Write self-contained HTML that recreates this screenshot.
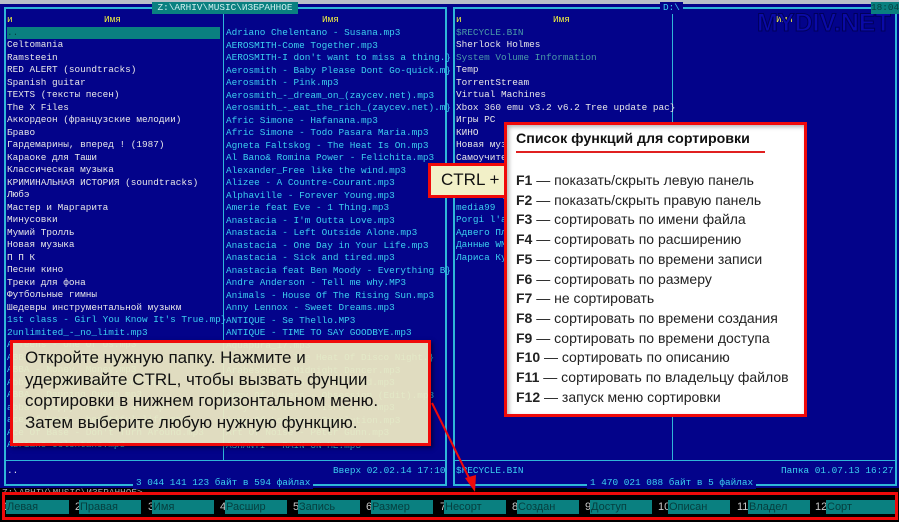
<!DOCTYPE html>
<html><head><meta charset="utf-8"><style>
*{margin:0;padding:0;box-sizing:border-box}
body{width:899px;height:522px;background:#000;position:relative;overflow:hidden;font-family:"Liberation Mono","DejaVu Sans Mono",monospace;font-size:9.4px}
.a{position:absolute;white-space:pre;line-height:12px}
.pan{position:absolute;background:#03038a}
.bd{position:absolute;border:1px solid #2fb6d8}
.vl{position:absolute;width:1px;background:#2fb6d8}
.hl{position:absolute;height:1px;background:#2fb6d8}
.w{color:#e8e8e8}.c{color:#3cd0f0}.y{color:#f0f040}.g{color:#4a9aa8}
.k{position:absolute;top:500px;height:14px;background:#0a8080;color:#063e3e;font-family:"Liberation Sans",sans-serif;font-size:11px;line-height:14px;padding-left:1px}
.kn{position:absolute;top:500px;color:#c8c8c8;font-size:11px;line-height:14px;font-family:"Liberation Sans",sans-serif}
.s{font-family:"Liberation Sans","DejaVu Sans",sans-serif}
</style></head><body>
<div style="position:absolute;left:0;top:0;width:899px;height:4px;background:#b8c0c8"></div>
<div class="pan" style="left:0;top:4px;width:450px;height:484px"></div>
<div class="pan" style="left:450px;top:4px;width:449px;height:484px"></div>
<div class="bd" style="left:4px;top:7px;width:443px;height:479px;border-width:2px"></div>
<div class="bd" style="left:453px;top:7px;width:444px;height:479px;border-width:2px"></div>
<div class="vl" style="left:223px;top:9px;height:451px"></div>
<div class="vl" style="left:672px;top:9px;height:451px"></div>
<div class="hl" style="left:6px;top:460px;width:439px"></div>
<div class="hl" style="left:455px;top:460px;width:440px"></div>
<div class="a" style="left:152px;top:2px;width:146px;height:12px;background:#0a8080;color:#d0f0f0;text-align:center">Z:\ARHIV\MUSIC\ИЗБРАННОЕ</div>
<div class="a c" style="left:660px;top:2px;background:#03038a;padding:0 3px">D:\</div>
<div class="a y" style="left:776px;top:14px">Имя</div>
<div class="a s" style="left:757px;top:9px;font-size:25px;line-height:28px;font-weight:bold;color:#0a0aa8;-webkit-text-stroke:1px #00005a">MYDIV.NET</div>
<div class="a" style="left:871px;top:2px;width:28px;background:#0a8080;color:#063e3e">18:04</div>
<div class="a y" style="left:7px;top:14px">и</div>
<div class="a y" style="left:104px;top:14px">Имя</div>
<div class="a y" style="left:322px;top:14px">Имя</div>
<div class="a y" style="left:456px;top:14px">и</div>
<div class="a y" style="left:553px;top:14px">Имя</div>
<div class="a" style="left:7px;top:27px;width:213px;height:12px;background:#0a8080;color:#063e3e">..</div>
<div class="a w" style="left:7px;top:39px;line-height:12.5px">Celtomania
Ramsteein
RED ALERT (soundtracks)
Spanish guitar
TEXTS (тексты песен)
The X Files
Аккордеон (французские мелодии)
Браво
Гардемарины, вперед ! (1987)
Караоке для Таши
Классическая музыка
КРИМИНАЛЬНАЯ ИСТОРИЯ (soundtracks)
Любэ
Мастер и Маргарита
Минусовки
Мумий Тролль
Новая музыка
П П К
Песни кино
Треки для фона
Футбольные гимны
Шедевры инструментальной музыкм</div>
<div class="a c" style="left:7px;top:314px;line-height:12.5px">1st class - Girl You Know It's True.mp}
2unlimited_-_no_limit.mp3
A-Teens - One Of Us.mp3
ABBA - Happy New Year.mp3
ABBA - Money, Money.mp3
Abba - Gimme Gimme Gimme.mp3
ABBA - Dancing Queen.mp3
abba - happy new year 424.mp3
ace_of_base_-_beautiful_life.mp3
Ace Of Base - Don't Turn Around.mp3
Adriano Celentano.mp3</div>
<div class="a c" style="left:226px;top:27px;line-height:12.5px">Adriano Chelentano - Susana.mp3
AEROSMITH-Come Together.mp3
AEROSMITH-I don't want to miss a thing.}
Aerosmith - Baby Please Dont Go-quick.m}
Aerosmith - Pink.mp3
Aerosmith_-_dream_on_(zaycev.net).mp3
Aerosmith_-_eat_the_rich_(zaycev.net).m}
Afric Simone - Hafanana.mp3
Afric Simone - Todo Pasara Maria.mp3
Agneta Faltskog - The Heat Is On.mp3
Al Bano& Romina Power - Felichita.mp3
Alexander_Free like the wind.mp3
Alizee - A Countre-Courant.mp3
Alphaville - Forever Young.mp3
Amerie feat Eve - 1 Thing.mp3
Anastacia - I'm Outta Love.mp3
Anastacia - Left Outside Alone.mp3
Anastacia - One Day in Your Life.mp3
Anastacia - Sick and tired.mp3
Anastacia feat Ben Moody - Everything B}
Andre Anderson - Tell me why.MP3
Animals - House Of The Rising Sun.mp3
Anny Lennox - Sweet Dreams.mp3
ANTIQUE - Se Thello.MP3
ANTIQUE - TIME TO SAY GOODBYE.mp3
Aquapura_17.mp3
Arabesque - The Heat Of Disco Night.}
Arabesque - Midnight Dancer.mp3
Army Of Lovers - Crucified.mp3
Army Of Lovers - Obsession (Edit).mp3
Army Of Lovers - Israelism.mp3
Army Of Lovers - Revolution.mp3
Art Of Noise - Peter Gunn.mp3
ASHANTI - RAIN ON ME.mp3</div>
<div class="a g" style="left:456px;top:27px">$RECYCLE.BIN</div>
<div class="a w" style="left:456px;top:39px;line-height:12.5px">Sherlock Holmes</div>
<div class="a g" style="left:456px;top:52px">System Volume Information</div>
<div class="a w" style="left:456px;top:64px;line-height:12.5px">Temp
TorrentStream
Virtual Machines
Xbox 360 emu v3.2 v6.2 Tree update pac}
Игры PC
КИНО
Новая музыка
Самоучитель</div>
<div class="a c" style="left:456px;top:189px;line-height:12.5px">Torrent-файлы
media99
Porgi l'amor
Адвего Плагиат
Данные WMP
Лариса Кудрявцева</div>
<div class="a w" style="left:7px;top:465px">..</div>
<div class="a c" style="left:333px;top:465px">Вверх 02.02.14 17:10</div>
<div class="a c" style="left:133px;top:477px;background:#03038a;padding:0 3px">3 044 141 123 байт в 594 файлах</div>
<div class="a c" style="left:456px;top:465px">$RECYCLE.BIN</div>
<div class="a c" style="left:781px;top:465px">Папка 01.07.13 16:27</div>
<div class="a c" style="left:587px;top:477px;background:#03038a;padding:0 3px">1 470 021 088 байт в 5 файлах</div>
<div class="a" style="left:2px;top:487px;color:#aaa">Z:\ARHIV\MUSIC\ИЗБРАННОЕ&gt;</div>
<div class="kn" style="left:3px">1</div><div class="k" style="left:6px;width:63px">Левая</div>
<div class="kn" style="left:75px">2</div><div class="k" style="left:79px;width:62px">Правая</div>
<div class="kn" style="left:148px">3</div><div class="k" style="left:152px;width:62px">Имя</div>
<div class="kn" style="left:220px">4</div><div class="k" style="left:225px;width:62px">Расшир</div>
<div class="kn" style="left:293px">5</div><div class="k" style="left:298px;width:62px">Запись</div>
<div class="kn" style="left:366px">6</div><div class="k" style="left:371px;width:62px">Размер</div>
<div class="kn" style="left:440px">7</div><div class="k" style="left:444px;width:62px">Несорт</div>
<div class="kn" style="left:512px">8</div><div class="k" style="left:517px;width:62px">Создан</div>
<div class="kn" style="left:585px">9</div><div class="k" style="left:590px;width:62px">Доступ</div>
<div class="kn" style="left:658px">10</div><div class="k" style="left:668px;width:62px">Описан</div>
<div class="kn" style="left:737px">11</div><div class="k" style="left:748px;width:62px">Владел</div>
<div class="kn" style="left:815px">12</div><div class="k" style="left:826px;width:69px">Сорт</div>
<div style="position:absolute;left:2px;top:492px;width:896px;height:28px;border:3px solid #f00a0a"></div>
<div style="position:absolute;left:10px;top:340px;width:421px;height:106px;background:rgba(238,234,196,0.94);border:3px solid #f00a0a;box-shadow:2px 2px 4px rgba(0,0,0,.5)"></div>
<div class="a s" style="left:25px;top:347px;font-size:17px;line-height:21.5px;color:#111">Откройте нужную папку. Нажмите и
удерживайте CTRL, чтобы вызвать фунции
сортировки в нижнем горизонтальном меню.
Затем выберите любую нужную функцию.</div>
<svg style="position:absolute;left:0;top:0" width="899" height="522"><line x1="432" y1="403" x2="471" y2="482" stroke="#f00a0a" stroke-width="2"/><polygon points="475,492 465,478 476,475" fill="#f00a0a"/></svg>
<div style="position:absolute;left:428px;top:163px;width:82px;height:35px;background:#f2f0c8;border:3px solid #f00a0a"></div>
<div class="a s" style="left:441px;top:170px;font-size:17px;line-height:20px;color:#111">CTRL +</div>
<div style="position:absolute;left:504px;top:122px;width:303px;height:295px;background:#fff;border:3px solid #f00a0a;box-shadow:inset 2px 2px 4px rgba(0,0,0,.3)"></div>
<div class="a s" style="left:516px;top:130px;font-size:14.2px;line-height:18px;font-weight:bold;color:#111">Список функций для сортировки</div>
<div style="position:absolute;left:516px;top:151px;width:249px;height:2px;background:#e02020"></div>
<div class="a s" style="left:516px;top:171px;font-size:14px;line-height:19.7px;color:#222"><b>F1</b> — показать/скрыть левую панель
<b>F2</b> — показать/скрыть правую панель
<b>F3</b> — сортировать по имени файла
<b>F4</b> — сортировать по расширению
<b>F5</b> — сортировать по времени записи
<b>F6</b> — сортировать по размеру
<b>F7</b> — не сортировать
<b>F8</b> — сортировать по времени создания
<b>F9</b> — сортировать по времени доступа
<b>F10</b> — сортировать по описанию
<b>F11</b> — сортировать по владельцу файлов
<b>F12</b> — запуск меню сортировки</div>
</body></html>
